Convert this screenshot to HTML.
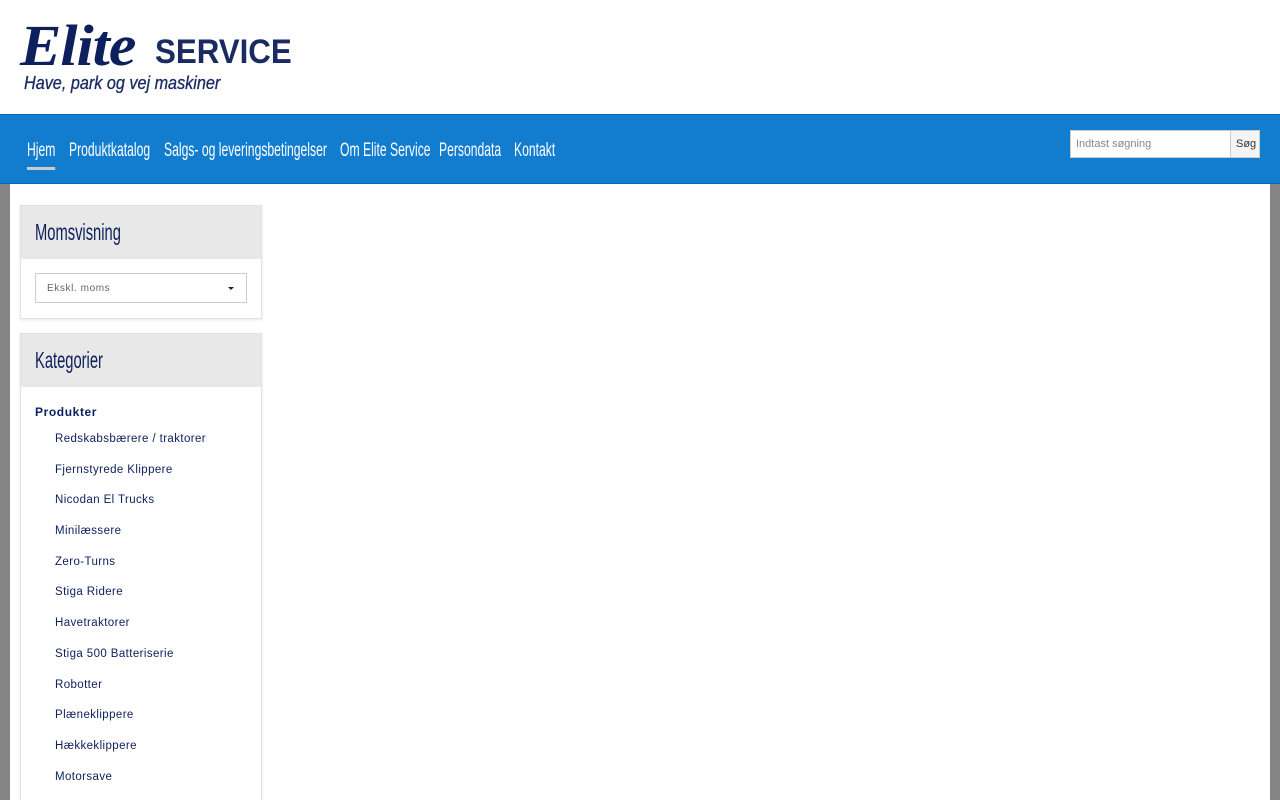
<!DOCTYPE html>
<html><head><meta charset="utf-8"><style>
*{box-sizing:border-box;margin:0;padding:0}
body{width:1280px;height:800px;overflow:hidden;background:#858585;font-family:"Liberation Sans",sans-serif;position:relative}
.head{position:absolute;left:0;top:0;width:1280px;height:114px;background:#fff}
.logo1{position:absolute;left:20px;top:12px;font-family:"Liberation Serif",serif;font-style:italic;font-weight:bold;font-size:58px;color:#0d1f5c;letter-spacing:-1px;transform:scaleX(1.07);transform-origin:left}
.logo2{position:absolute;left:155px;top:33px;font-weight:bold;font-size:34px;color:#1a2a62;transform:scaleX(.92);transform-origin:left}
.logo3{position:absolute;left:24px;top:73px;font-style:italic;font-size:18px;color:#1a2a62;transform:scaleX(.9);transform-origin:left;-webkit-text-stroke:.3px #1a2a62}
.nav{position:absolute;left:0;top:114px;width:1280px;height:70px;background:#127ccf;border-top:1px solid #0c6ab5;border-bottom:1px solid #0c6ab5}
.nav a{position:absolute;top:25px;color:#fff;font-family:"Liberation Sans",sans-serif;font-size:19px;text-decoration:none;white-space:nowrap;transform:scaleX(.64);transform-origin:left}
.nav a.act:after{content:"";position:absolute;left:0;right:0;top:27px;height:3px;background:#ccc}
.search{position:absolute;left:1070px;top:15px;width:161px;height:28px;background:#fff;border:1px solid #ccc;font-size:11px;color:#888;padding:7px 5px}
.sbtn{position:absolute;left:1230px;top:15px;width:30px;height:28px;background:#f4f4f4;border:1px solid #ccc;font-size:11px;color:#333;padding:7px 5px}
.main{position:absolute;left:10px;top:184px;width:1260px;height:616px;background:#fff;overflow:hidden}
.box{position:absolute;left:10px;width:242px;border:1px solid #e2e2e2;background:#fff;box-shadow:0 1px 3px rgba(0,0,0,.1)}
.bh{background:#e8e8e8;height:53px;padding:13px 14px;font-size:23px;color:#0d1f5c;white-space:nowrap}
.bh span{display:inline-block;transform:scaleX(.64);transform-origin:left}
.sel{margin:14px 14px;height:30px;border:1px solid #ccc;font-size:10px;color:#666;padding:9px 11px;letter-spacing:.6px;position:relative}
.sel:after{content:"";position:absolute;right:12px;top:13px;border:3px solid transparent;border-top-color:#222;border-bottom:0}
.cat{font-size:12px;color:#0d1f5c;padding:18px 14px 0}
.cat b{display:block;font-size:12px;letter-spacing:.6px;margin-bottom:14px}
.cat div{padding-left:20px;height:30.7px;font-size:11.5px;letter-spacing:.4px}
</style></head><body>
<div class="head">
<div class="logo1">Elite</div>
<div class="logo2">SERVICE</div>
<div class="logo3">Have, park og vej maskiner</div>
</div>
<div class="nav">
<a class="act" style="left:27px">Hjem</a>
<a style="left:69px">Produktkatalog</a>
<a style="left:164px">Salgs- og leveringsbetingelser</a>
<a style="left:340px">Om Elite Service</a>
<a style="left:439px">Persondata</a>
<a style="left:514px">Kontakt</a>
<div class="search">Indtast søgning</div><div class="sbtn">Søg</div>
</div>
<div class="main">
<div class="box" style="top:21px;height:114px"><div class="bh"><span>Momsvisning</span></div><div class="sel">Ekskl. moms</div></div>
<div class="box" style="top:149px;height:480px"><div class="bh"><span>Kategorier</span></div>
<div class="cat"><b>Produkter</b>
<div>Redskabsbærere / traktorer</div><div>Fjernstyrede Klippere</div><div>Nicodan El Trucks</div><div>Minilæssere</div><div>Zero-Turns</div><div>Stiga Ridere</div><div>Havetraktorer</div><div>Stiga 500 Batteriserie</div><div>Robotter</div><div>Plæneklippere</div><div>Hækkeklippere</div><div>Motorsave</div>
</div></div>
</div>
</body></html>
